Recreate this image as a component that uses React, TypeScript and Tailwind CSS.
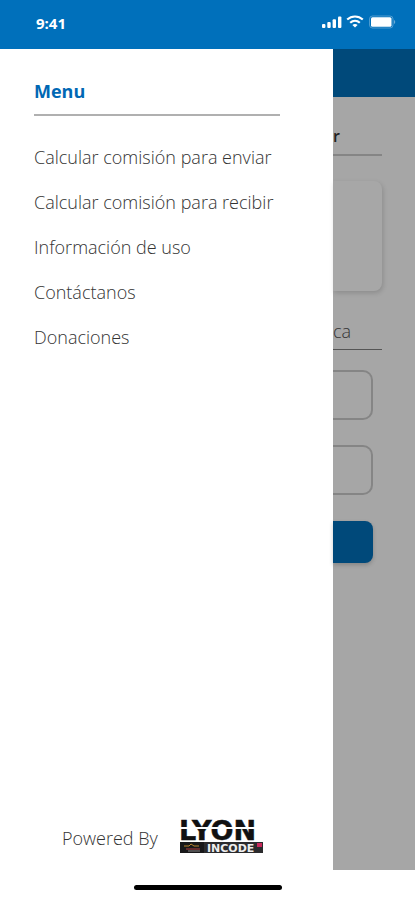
const menuItems = [
  "Calcular comisión para enviar",
  "Calcular comisión para recibir",
  "Información de uso",
  "Contáctanos",
  "Donaciones",
];

function StatusBar() {
  return (
    <header className="flex h-[49px] shrink-0 items-center justify-between bg-[#0070bb] pr-[19px] pb-1 pl-9 text-white">
      <span className="text-[15px] leading-6 font-bold">9:41</span>
      <div className="flex items-center gap-1 pb-0.5">
        <svg width="20" height="12" viewBox="0 0 20 12" fill="currentColor" aria-hidden="true">
          <rect x="0" y="8" width="3.4" height="4" rx="1" />
          <rect x="5.3" y="6" width="3.4" height="6" rx="1" />
          <rect x="10.6" y="3.3" width="3.4" height="8.7" rx="1" />
          <rect x="16" y="0.5" width="3.4" height="11.5" rx="1" />
        </svg>
        <svg width="18" height="13" viewBox="0 0 18 13" fill="none" stroke="currentColor" strokeWidth="2.1" aria-hidden="true">
          <path d="M1.2 4.6C5.6 .4 12.4 .4 16.8 4.6" />
          <path d="M4.2 7.8C7 5.2 11 5.2 13.8 7.8" />
          <path d="M9 12.6 6.4 10C7.9 8.7 10.1 8.7 11.6 10Z" fill="currentColor" stroke="none" />
        </svg>
        <svg width="28" height="14" viewBox="0 0 28 14" aria-hidden="true">
          <rect x="1.5" y="1" width="23.5" height="12" rx="3" fill="none" stroke="currentColor" strokeOpacity=".3" />
          <rect x="3" y="2.3" width="20.5" height="9.4" rx="1.5" fill="currentColor" />
          <path d="M26.2 5v4c1.3-.6 1.3-3.4 0-4Z" fill="currentColor" fillOpacity=".5" />
        </svg>
      </div>
    </header>
  );
}

function LyonLogo() {
  return (
    <svg width="86" height="40" viewBox="0 -8 86 40" role="img" aria-label="Lyon Incode">
      <text x="0" y="18" fontFamily="DejaVu Sans, sans-serif" fontWeight="700" fontSize="27" fill="#111" stroke="#111" strokeWidth="0.5">
        LYON
      </text>
      <rect x="0" y="5" width="86" height="2" fill="#fff" />
      <rect x="1" y="20" width="83" height="11" fill="#2b2b2d" />
      <rect x="1" y="20" width="24" height="11" fill="#18181a" />
      <path d="M5 24h5l2-2 3 2h5" fill="none" stroke="#b8862f" />
      <path d="M7 27h14" stroke="#b33c40" />
      <path d="M9 29h12" stroke="#888" />
      <text x="28" y="30" fontFamily="DejaVu Sans, sans-serif" fontWeight="700" fontSize="11" fill="#eee">
        INCODE
      </text>
      <rect x="78" y="21" width="5" height="4" fill="#c8285a" />
    </svg>
  );
}

function Drawer() {
  return (
    <aside className="flex flex-col bg-white pt-7">
      <div className="ml-[34px] w-[246px] border-b-2 border-[#b0b0b0] pb-[9px]">
        <h1 className="text-lg leading-7 font-bold text-[#0068b4]">Menu</h1>
      </div>
      <nav className="mt-[18px] ml-[34px]">
        <ul>
          {menuItems.map((item) => (
            <li key={item} className="flex h-[45px] items-center whitespace-nowrap">
              <a href="#" className="text-lg font-light">{item}</a>
            </li>
          ))}
        </ul>
      </nav>
      <div className="mt-auto flex items-end gap-[21px] pb-4 pl-[62px]">
        <span className="text-lg leading-8 font-light">Powered By</span>
        <LyonLogo />
      </div>
    </aside>
  );
}

function DimmedPage() {
  return (
    <main className="bg-[#a6a6a6]">
      <div className="h-12 bg-[#00497a]" />
      <div className="mr-[33px] pt-[27px]">
        <h2 className="border-b-2 border-[#858585] pb-1.5 text-base leading-6 font-semibold text-[#222]">r</h2>
        <div className="mt-[25px] h-[110px] rounded-r-lg bg-[#a7a7a7] shadow-[1px_2px_5px_rgba(0,0,0,0.16)]" />
        <h2 className="mt-7 border-b border-[#555] pb-1.5 text-lg leading-6 font-light">ca</h2>
      </div>
      <form className="mr-[42px] mt-5 flex flex-col">
        <input aria-label="Monto" className="h-[50px] w-full rounded-r-[10px] border-2 border-l-0 border-[#858585]" />
        <input aria-label="Total" className="mt-[25px] h-[50px] w-full rounded-r-[10px] border-2 border-l-0 border-[#858585]" />
        <button type="button" aria-label="Calcular" className="mt-[26px] h-[42px] rounded-r-lg bg-[#00497a] shadow-[0_2px_4px_rgba(0,0,0,0.2)]" />
      </form>
    </main>
  );
}

export default function App() {
  return (
    <div className="flex min-h-screen flex-col bg-white font-['Open_Sans','Noto_Sans',sans-serif] text-[#333]">
      <StatusBar />
      <div className="grid flex-1 grid-cols-[333fr_82fr]">
        <Drawer />
        <DimmedPage />
      </div>
      <footer className="flex h-[30px] shrink-0 items-center justify-center pt-1">
        <div className="h-[5px] w-[148px] rounded-full bg-black" />
      </footer>
    </div>
  );
}
